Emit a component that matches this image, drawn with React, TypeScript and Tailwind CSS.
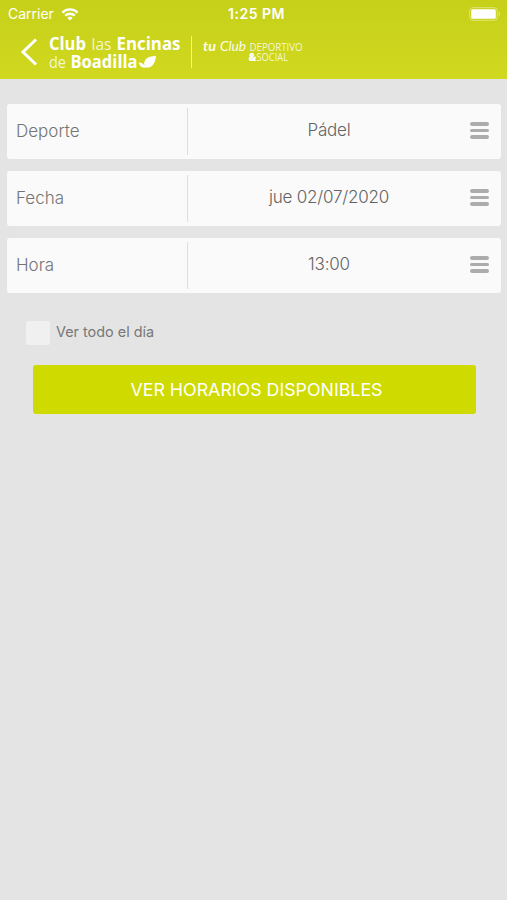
const fields = [
    { label: "Deporte", value: "Pádel" },
    { label: "Fecha", value: "jue 02/07/2020" },
    { label: "Hora", value: "13:00" },
]

function StatusBar() {
    return (
        <div className="grid h-7 grid-cols-3 items-center pl-2 pr-1.5 text-white">
            <div className="flex items-center gap-[7px]">
                <span className="text-[14px] leading-none">Carrier</span>
                <svg width="18" height="13" viewBox="0 0 17 13" fill="none" stroke="white" strokeWidth="2.3">
                    <path d="M0.9 4.6C5.2 0.4 11.8 0.4 16.1 4.6" />
                    <path d="M3.7 7.7C6.4 5.1 10.6 5.1 13.3 7.7" />
                    <path d="M8.5 12.6L5.8 9.9C7.4 8.5 9.6 8.5 11.2 9.9Z" fill="white" stroke="none" />
                </svg>
            </div>
            <span className="pl-1 text-center text-[14px] font-semibold leading-none tracking-[0.5px]">1:25 PM</span>
            <svg className="justify-self-end" width="32" height="14" viewBox="0 0 32 14">
                <rect x="0.7" y="0.7" width="27.6" height="12.6" rx="3" fill="none" stroke="white" strokeOpacity="0.4" />
                <rect x="2.2" y="2.2" width="24.6" height="9.6" rx="1.5" fill="white" />
                <path d="M29.7 4.6C31.6 5.4 31.6 8.6 29.7 9.4Z" fill="white" fillOpacity="0.4" />
            </svg>
        </div>
    )
}

function ClubLogo() {
    return (
        <svg
            className="ml-[11px]"
            width="270"
            height="40"
            viewBox="0 0 270 40"
            fill="white"
            fontFamily="'Open Sans', 'Noto Sans', sans-serif"
        >
            <g fontSize="17">
                <text x="0" y="17.5" fontWeight="700" textLength="37" lengthAdjust="spacingAndGlyphs">Club</text>
                <text x="42.5" y="17.5" fontWeight="400" fillOpacity="0.8" textLength="20" lengthAdjust="spacingAndGlyphs">las</text>
                <text x="67.5" y="17.5" fontWeight="700" textLength="64" lengthAdjust="spacingAndGlyphs">Encinas</text>
                <text x="0" y="36" fontWeight="400" fillOpacity="0.8" textLength="17" lengthAdjust="spacingAndGlyphs">de</text>
                <text x="21.5" y="36" fontWeight="700" textLength="67" lengthAdjust="spacingAndGlyphs">Boadilla</text>
            </g>
            <path d="M95.5 34C94 28 98 24 107 24C106.5 31 103 36.5 96.5 35.5C93 36.5 90.5 34 89.5 30.5C92.5 30.3 94.5 31.5 95.5 34Z" />
            <rect x="142" y="4" width="1" height="32" fillOpacity="0.65" />
            <g fontFamily="Lato, sans-serif" fontStyle="italic" fontSize="13.5" fillOpacity="0.95">
                <text x="154" y="19" fontWeight="700" textLength="13" lengthAdjust="spacingAndGlyphs">tu</text>
                <text x="171" y="19" fontWeight="400" textLength="26" lengthAdjust="spacingAndGlyphs">Club</text>
            </g>
            <g fontSize="10" fillOpacity="0.8">
                <text x="200.5" y="18.5" fontWeight="400" textLength="53" lengthAdjust="spacingAndGlyphs">DEPORTIVO</text>
                <text x="199.5" y="28.8" fontWeight="800" fillOpacity="1" textLength="8" lengthAdjust="spacingAndGlyphs">&amp;</text>
                <text x="207.5" y="28.8" fontWeight="400" textLength="31.5" lengthAdjust="spacingAndGlyphs">SOCIAL</text>
            </g>
        </svg>
    )
}

function Field({ label, value }: { label: string; value: string }) {
    return (
        <button className="flex h-[55px] w-full items-center rounded-[3px] bg-[#fafafa] text-[17px] font-light">
            <span className="w-[180px] pl-[9px] text-left text-[#747474]">{label}</span>
            <span className="h-[47px] w-px bg-[#dedede]" />
            <span className="flex-1 pb-px text-center tracking-[-0.2px] text-[#636363]">{value}</span>
            <span className="mb-0.5 mr-3 flex w-[19px] flex-col gap-[3px]">
                <span className="h-[3.4px] rounded-full bg-[#acacac]" />
                <span className="h-[3.4px] rounded-full bg-[#acacac]" />
                <span className="h-[3.4px] rounded-full bg-[#acacac]" />
            </span>
        </button>
    )
}

export default function App() {
    return (
        <main className="min-h-screen w-full bg-[#e4e4e4] font-['Inter',sans-serif]">
            <header className="h-[79px] bg-linear-to-b from-[#c7d019] to-[#d0d91f]">
                <StatusBar />
                <div className="flex h-12 items-center pl-5">
                    <svg width="18" height="30" viewBox="0 0 18 30" fill="none" stroke="white" strokeWidth="3">
                        <path d="M16 2.5L3 15L16 27.5" />
                    </svg>
                    <ClubLogo />
                </div>
            </header>

            <section className="flex flex-col gap-3 pl-[7px] pr-1.5 pt-[25px]">
                {fields.map((field) => (
                    <Field key={field.label} label={field.label} value={field.value} />
                ))}
            </section>

            <label className="ml-[26px] mt-[27px] flex h-[25px] items-center gap-1.5">
                <span className="h-6 w-6 rounded-[2px] bg-[#f0f0f0]" />
                <span className="pb-0.5 text-[14.4px] font-normal text-[#777]">Ver todo el día</span>
            </label>

            <button className="ml-[33px] mt-5 h-[49px] w-[443px] rounded-[3px] bg-[#cfdb00] pl-1 pt-0.5 text-[17.8px] text-white">
                VER HORARIOS DISPONIBLES
            </button>
        </main>
    )
}
